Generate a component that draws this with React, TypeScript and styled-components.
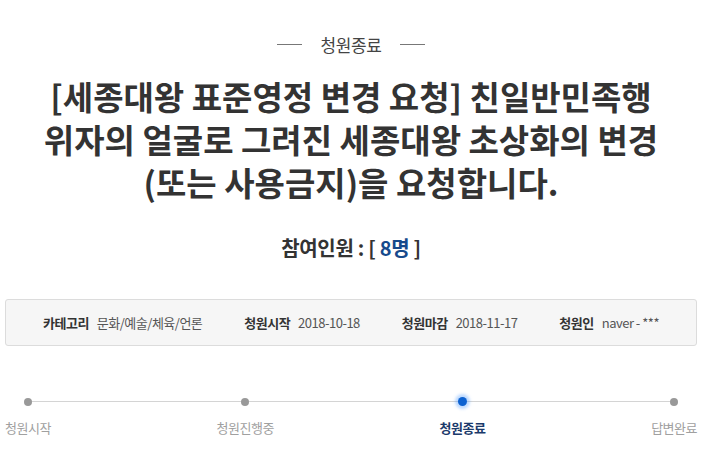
import React from "react";
import styled, { createGlobalStyle } from "styled-components";

const GlobalStyle = createGlobalStyle`
    body {
        margin: 0;
        background: #fff;
        font-family: "Noto Sans CJK KR", "Noto Sans", sans-serif;
        color: #333;
    }
`;

const Page = styled.div`
    width: 692px;
    margin-left: 5px;
    padding-top: 34px;
`;

const StatusHead = styled.div`
    display: flex;
    align-items: center;
    justify-content: center;
    gap: 19px;
    height: 20px;
    font-size: 17px;
    letter-spacing: -0.4px;
    color: #444;

    &::before,
    &::after {
        content: "";
        width: 25px;
        height: 1px;
        background: #777;
    }
`;

const Title = styled.h1`
    margin: 21px 0 0;
    font-size: 33px;
    font-weight: 700;
    line-height: 43px;
    letter-spacing: 0;
    text-align: center;
    color: #333;
`;

const Count = styled.div`
    margin-top: 32px;
    font-size: 20px;
    font-weight: 700;
    line-height: 24px;
    letter-spacing: -0.3px;
    text-align: center;
    color: #333;
`;

const Num = styled.span`
    color: #164a8c;
`;

const InfoBox = styled.ul`
    display: flex;
    justify-content: space-between;
    align-items: center;
    box-sizing: border-box;
    height: 47px;
    margin: 39px 0 0;
    padding: 0 37px;
    list-style: none;
    background: #f6f6f6;
    border: 1px solid #dcdcdc;
    border-radius: 3px;
`;

const InfoItem = styled.li`
    display: flex;
    align-items: baseline;
    gap: 8px;
`;

const InfoLabel = styled.strong`
    font-size: 13px;
    font-weight: 700;
    letter-spacing: -0.5px;
    color: #333;
`;

const InfoValue = styled.span`
    font-size: 13px;
    letter-spacing: -0.5px;
    color: #555;
`;

const Steps = styled.ol`
    position: relative;
    display: flex;
    justify-content: space-between;
    margin: 52px 0 0;
    padding: 0;
    list-style: none;

    &::before {
        content: "";
        position: absolute;
        top: 3px;
        left: 23px;
        right: 23px;
        height: 1px;
        background: #d4d4d4;
    }
`;

const Step = styled.li`
    position: relative;
    display: flex;
    flex-direction: column;
    align-items: center;
`;

const Dot = styled.span<{ $active?: boolean }>`
    width: ${(p) => (p.$active ? "9px" : "8px")};
    height: ${(p) => (p.$active ? "9px" : "8px")};
    margin-top: ${(p) => (p.$active ? "-1px" : "0")};
    border-radius: 50%;
    background: ${(p) => (p.$active ? "#0d62d1" : "#999")};
    box-shadow: ${(p) => (p.$active ? "0 0 3px 3px rgba(70, 150, 255, 0.35)" : "none")};
`;

const StepLabel = styled.span<{ $active?: boolean }>`
    margin-top: 14px;
    font-size: 13px;
    line-height: 16px;
    letter-spacing: -0.5px;
    font-weight: ${(p) => (p.$active ? 700 : 400)};
    color: ${(p) => (p.$active ? "#1b3a6b" : "#a0a0a0")};
`;

const info = [
    { label: "카테고리", value: "문화/예술/체육/언론" },
    { label: "청원시작", value: "2018-10-18" },
    { label: "청원마감", value: "2018-11-17" },
    { label: "청원인", value: "naver - ***" },
];

const steps = ["청원시작", "청원진행중", "청원종료", "답변완료"];
const activeStep = 2;

const App = () => {
    return (
        <>
            <GlobalStyle />
            <Page>
                <StatusHead>청원종료</StatusHead>
                <Title>
                    [세종대왕 표준영정 변경 요청] 친일반민족행
                    <br />
                    위자의 얼굴로 그려진 세종대왕 초상화의 변경
                    <br />
                    (또는 사용금지)을 요청합니다.
                </Title>
                <Count>
                    참여인원 : [ <Num>8명</Num> ]
                </Count>
                <InfoBox>
                    {info.map((item) => (
                        <InfoItem key={item.label}>
                            <InfoLabel>{item.label}</InfoLabel>
                            <InfoValue>{item.value}</InfoValue>
                        </InfoItem>
                    ))}
                </InfoBox>
                <Steps>
                    {steps.map((s, i) => (
                        <Step key={s}>
                            <Dot $active={i === activeStep} />
                            <StepLabel $active={i === activeStep}>{s}</StepLabel>
                        </Step>
                    ))}
                </Steps>
            </Page>
        </>
    );
};

export default App;
